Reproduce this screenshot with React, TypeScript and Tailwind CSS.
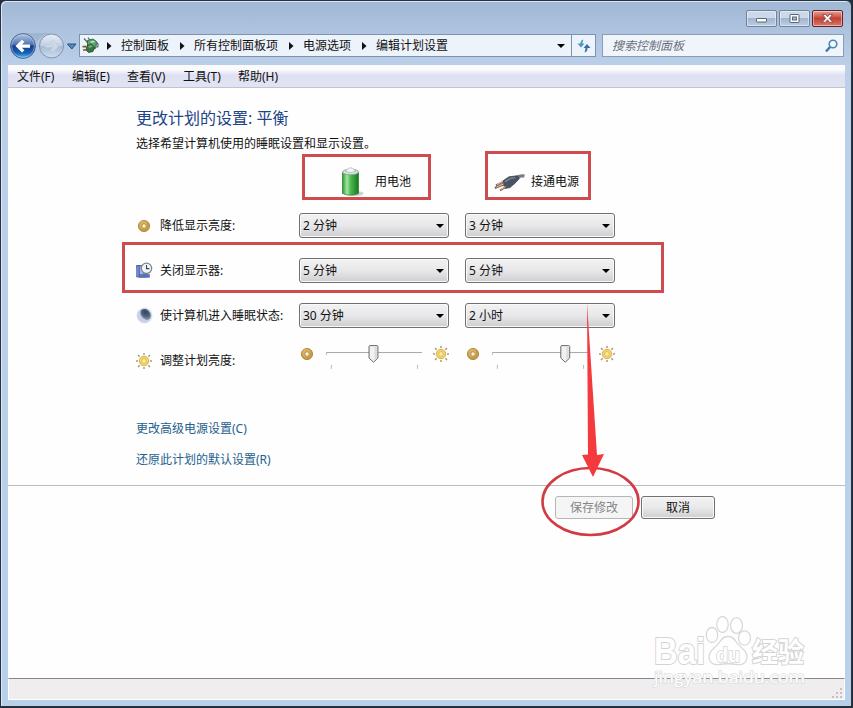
import React from "react";
import clsx from "clsx";

const crumbs = [
  { label: "控制面板", width: "w-[73px]" },
  { label: "所有控制面板项", width: "w-[109px]" },
  { label: "电源选项", width: "w-[73px]" },
  { label: "编辑计划设置", width: "w-[90px]" },
];

const menus = [
  { label: "文件(F)", width: "w-[55px]" },
  { label: "编辑(E)", width: "w-[55px]" },
  { label: "查看(V)", width: "w-[56px]" },
  { label: "工具(T)", width: "w-[55px]" },
  { label: "帮助(H)", width: "w-[60px]" },
];

const rows = [
  { label: "降低显示亮度:", icon: <DimIcon />, battery: "2 分钟", plugged: "3 分钟" },
  { label: "关闭显示器:", icon: <MonitorIcon />, battery: "5 分钟", plugged: "5 分钟" },
  { label: "使计算机进入睡眠状态:", icon: <MoonIcon />, battery: "30 分钟", plugged: "2 小时" },
];

function DimIcon() {
  return (
    <svg width="14" height="14" viewBox="0 0 14 14" className="shrink-0">
      <circle cx="7" cy="7" r="5.6" fill="#c79a45" stroke="#a57c35" strokeWidth="0.8" />
      <circle cx="6.3" cy="6" r="4" fill="#dcb866" opacity="0.8" />
      <circle cx="7" cy="7" r="2.2" fill="#fbf3da" stroke="#a37a30" strokeWidth="0.7" />
    </svg>
  );
}

function SunIcon() {
  return (
    <svg width="18" height="18" viewBox="0 0 18 18" className="shrink-0">
      <g stroke="#a89c78" strokeWidth="1.5">
        <path d="M9 1v2M9 15v2M1 9h2M15 9h2M3 3l1.7 1.700M13.300 13.300l1.700 1.700M3 15l1.700-1.700M13.300 4.700 15 3" />
      </g>
      <circle cx="9" cy="9" r="4.7" fill="#f4d768" stroke="#d3a947" strokeWidth="0.9" />
      <circle cx="9" cy="9" r="2.4" fill="#fbeb9f" stroke="#dfb854" strokeWidth="0.9" />
    </svg>
  );
}

function MonitorIcon() {
  return (
    <svg width="17" height="17" viewBox="0 0 17 17" className="shrink-0">
      <path d="M0.7 3.5h10v11.500H3z" fill="#6f84cf" stroke="#5365a8" />
      <path d="M.7 3.500h2.500v11.500H.7z" fill="#7d90d6" stroke="#4c5ea3" strokeWidth="0.8" />
      <path d="M4 4.300h3v9.500H4z" fill="#a6b4e8" />
      <path d="M3 12.500h10.500v2.800H3z" fill="#5f73c2" stroke="#4b5fae" strokeWidth="0.6" />
      <circle cx="10.5" cy="6.3" r="5.2" fill="#f2f5f7" stroke="#7c8791" strokeWidth="1.3" />
      <path d="M10.5 2.9v3.7h2.8" fill="none" stroke="#39434e" strokeWidth="1.1" />
    </svg>
  );
}

function MoonIcon() {
  return (
    <svg width="17" height="17" viewBox="0 0 17 17" className="shrink-0">
      <defs>
        <radialGradient id="moon" cx="0.65" cy="0.35" r="0.75">
          <stop offset="0" stopColor="#35445e" />
          <stop offset="0.55" stopColor="#53647f" />
          <stop offset="1" stopColor="#93a4be" />
        </radialGradient>
      </defs>
      <circle cx="8.5" cy="8.5" r="7.6" fill="#c5d2e6" stroke="#d9e1ed" strokeWidth="0.8" />
      <ellipse cx="9.6" cy="7.4" rx="4.6" ry="6" transform="rotate(-40 9.6 7.4)" fill="url(#moon)" />
    </svg>
  );
}

function BatteryIcon() {
  return (
    <svg width="24" height="32" viewBox="0 0 24 32" className="shrink-0">
      <defs>
        <linearGradient id="cell" x1="0" x2="1">
          <stop offset="0" stopColor="#2d9a38" />
          <stop offset="0.28" stopColor="#a2e69c" />
          <stop offset="0.5" stopColor="#4fb953" />
          <stop offset="1" stopColor="#16781f" />
        </linearGradient>
      </defs>
      <ellipse cx="15" cy="27.5" rx="7.5" ry="2.6" fill="#b6beb8" opacity="0.7" />
      <path d="M1.5 6.5v21q8 3.500 16 0v-21z" fill="url(#cell)" stroke="#35803b" strokeWidth="0.8" />
      <ellipse cx="9.5" cy="6" rx="8" ry="2.800" fill="#d7e5dc" stroke="#829c8a" strokeWidth="0.8" />
      <path d="M4 5.300 7.500 2.300q2-1 4 0L15 5.300q-5.500 2.500-11 0z" fill="#f3f6f8" stroke="#9daeb0" strokeWidth="0.7" />
    </svg>
  );
}

function PlugIcon() {
  return (
    <svg width="33" height="19" viewBox="0 0 33 19" className="shrink-0">
      <path d="M22 5.500q4-3.500 9.500-2.500" fill="none" stroke="#767d86" strokeWidth="3.2" />
      <path d="M9 8.500 16 3.800l8-1 2.500 2.500-3.500 4-6 5.300-5 .8z" fill="#495361" stroke="#343c48" strokeWidth="0.7" />
      <path d="M12 8.8 17.500 5.300l5-.5" fill="none" stroke="#8b96a5" strokeWidth="1.1" />
      <path d="M10 8.800 3 12.500M10.500 11.500 1.800 15M12.500 14 7 17.500" stroke="#80624c" strokeWidth="2" />
      <path d="M10 8.300 4 11.700M10.500 11 3.500 14M12.500 13.500 7.700 16.500" stroke="#ecd3b8" strokeWidth="0.9" />
    </svg>
  );
}

function PowerIcon() {
  return (
    <svg width="17" height="18" viewBox="0 0 17 18" className="shrink-0">
      <path d="M2 1.5 6 6M6 0.7 8.5 4" stroke="#5c665f" strokeWidth="1.2" />
      <path d="M5.500 3.500 11 2l3.500 2.500-.5 6.500-4 2-4.500-1z" fill="#5da56c" stroke="#255638" strokeWidth="0.8" />
      <path d="M8 4.5 11.5 3.7l1.8 1.2-4 1.2z" fill="#b3dfb8" />
      <path d="M14.5 5.5q2.5 1 1 5" fill="none" stroke="#4c6b55" strokeWidth="1.2" />
      <path d="M5 8.700 9 7l3.500 3-1.500 4.500-4.500 1L4 13z" fill="#397447" stroke="#244b30" strokeWidth="0.8" />
      <path d="M5.800 9.300 9 8l2 1.500-3.500 1.500z" fill="#71ae7c" />
      <path d="M.5 9.700h4M1 13h4" stroke="#7d5437" strokeWidth="1.7" />
    </svg>
  );
}

function Triangle({ className }: { className?: string }) {
  return (
    <svg width="8" height="4" viewBox="0 0 8 4" className={clsx("shrink-0", className)}>
      <path d="M0 0h8L4 4z" fill="#000" />
    </svg>
  );
}

function NavButtons() {
  return (
    <svg width="70" height="30" viewBox="0 0 70 30" className="shrink-0">
      <defs>
        <linearGradient id="back" x1="0" y1="0" x2="0" y2="1">
          <stop offset="0" stopColor="#b9cae6" />
          <stop offset="0.43" stopColor="#5277b5" />
          <stop offset="0.5" stopColor="#123e8b" />
          <stop offset="0.78" stopColor="#1b60b8" />
          <stop offset="1" stopColor="#57c7f2" />
        </linearGradient>
        <linearGradient id="forward" x1="0" y1="0" x2="0" y2="1">
          <stop offset="0" stopColor="#e8eef6" />
          <stop offset="0.48" stopColor="#c3d0e2" />
          <stop offset="0.5" stopColor="#a8bad3" />
          <stop offset="1" stopColor="#cfdeee" />
        </linearGradient>
      </defs>
      <path d="M15 2h27q-9 2-13 9-4-7-14-9" fill="#9eb1cd" opacity="0.8" />
      <circle cx="15" cy="15" r="12.4" fill="url(#back)" stroke="#49658e" />
      <circle cx="15" cy="15" r="11.3" fill="none" stroke="#c2d5ec" strokeWidth="0.7" opacity="0.7" />
      <path d="M7.5 15 14 8.8l2.4 2.2-2.5 2.4H22v3.4h-8.1l2.5 2.4-2.4 2.2z" fill="#fff" />
      <circle cx="43.5" cy="15" r="12" fill="url(#forward)" stroke="#8094b1" />
      <path d="m51 15-6.3-6-2.2 2.2 2.4 2.3H37v3.1h7.9l-2.4 2.3 2.2 2.2z" fill="#ccd8e6" stroke="#b8c7d9" strokeWidth="0.5" />
      <path d="M59.5 13h8.5l-4.2 5z" fill="#518bc0" stroke="#294d7f" />
    </svg>
  );
}

function WindowButton({ kind }: { kind: "min" | "max" | "close" }) {
  return (
    <div
      className={clsx(
        "flex h-[17px] w-[31px] items-center justify-center rounded-[2px] border shadow-[inset_0_0_0_1px_rgba(255,255,255,0.45)]",
        kind === "close"
          ? "border-[#671e24] bg-linear-to-b from-[#e0a197] from-0% via-[#c43f34] via-50% to-[#d77967]"
          : "border-[#71829b] bg-linear-to-b from-[#cbd9ea] from-45% via-[#a3b6cf] via-50% to-[#bccde2]",
      )}
    >
      <svg width="13" height="11" viewBox="0 0 13 11">
        {kind === "min" && <rect x="1.5" y="5.5" width="10" height="3.5" rx="0.5" fill="#fff" stroke="#59677d" />}
        {kind === "max" && (
          <>
            <rect x="2" y="1.5" width="9" height="8" rx="0.5" fill="#fff" stroke="#59677d" />
            <rect x="4.5" y="4" width="4" height="3" fill="#a8b8cc" stroke="#59677d" />
          </>
        )}
        {kind === "close" && (
          <path d="M1.500 1.500h3l2 2.300 2-2.300h3L8.300 5.400l3.500 4h-3l-2.300-2.600-2.300 2.600h-3l3.500-4z" fill="#fff" stroke="#6d3237" strokeWidth="0.7" />
        )}
      </svg>
    </div>
  );
}

function Select({ value }: { value: string }) {
  return (
    <div className="flex h-[25px] w-[150px] items-center justify-between rounded-[3px] border border-[#707070] bg-linear-to-b from-[#f3f2f3] from-0% via-[#e8e7e9] via-50% to-[#cecdd0] pr-1 pl-[3px] shadow-[inset_0_0_0_1px_#faf9fa]">
      <span>{value}</span>
      <Triangle />
    </div>
  );
}

function BrightnessSlider({ value }: { value: number }) {
  return (
    <div className="flex w-[150px] items-start">
      <div className="pt-[5px]">
        <DimIcon />
      </div>
      <svg width="104" height="30" viewBox="0 0 104 30" className="ml-[7px]">
        <path d="M5 10.5h97" stroke="#a9a9ad" />
        <path d="M5.5 10v3M10.5 23v4M97.5 23v4" stroke="#b9b9bd" />
        <g transform={`translate(${value} 0)`}>
          <path d="M-4.500 4.500q0-1 1-1h7q1 0 1 1V16L0 20.300-4.500 16z" fill="#f1f1f2" stroke="#65666a" />
          <path d="M1 5h2.500v10.500L1 18z" fill="#dcdcdf" />
        </g>
      </svg>
      <div className="ml-[8px] pt-[3px]">
        <SunIcon />
      </div>
    </div>
  );
}

function Watermark() {
  return (
    <svg width="158" height="78" viewBox="0 0 158 78" className="absolute top-[612px] left-[652px]">
      <g fill="#fff" stroke="#d9d9d9" strokeWidth="1.3">
        <ellipse cx="60" cy="23" rx="5.7" ry="7.5" />
        <ellipse cx="70.5" cy="12.5" rx="5.7" ry="8" />
        <ellipse cx="84.5" cy="13.5" rx="6" ry="7.8" />
        <ellipse cx="92.5" cy="26" rx="6" ry="7.2" />
        <path d="M76 24.500q5 0 8 5 2 3 7 7.500 5.500 5 3.500 11-2.500 5.500-9.500 4.500-9-1.500-18 0-7 1-9.500-4.500-2-6 3.500-11 5-4.500 7-7.500 3-5 8-5z" />
      </g>
      <g fill="#fff" stroke="#d4d4d4" strokeWidth="2" paintOrder="stroke" fontFamily="'Liberation Sans', 'Noto Sans CJK SC', sans-serif" fontWeight="700">
        <text x="2" y="52" fontSize="36" textLength="51" lengthAdjust="spacingAndGlyphs">Bai</text>
        <text x="64" y="50" fontSize="20" textLength="24" strokeWidth="1.5" lengthAdjust="spacingAndGlyphs">du</text>
        <text x="100" y="50" fontSize="27" textLength="52" lengthAdjust="spacingAndGlyphs">经验</text>
      </g>
      <text x="2" y="71" fontSize="17" fill="#fff" stroke="#dddddf" strokeWidth="1.5" paintOrder="stroke" fontFamily="'Open Sans', sans-serif" textLength="151" lengthAdjust="spacingAndGlyphs">
        jingyan.baidu.com
      </text>
    </svg>
  );
}

// Red marks over the dialog that point out what to change and where to save.
function Annotations() {
  return (
    <svg width="853" height="708" viewBox="0 0 853 708" className="pointer-events-none absolute top-0 left-0">
      <g fill="none" stroke="#ce4c4e" strokeWidth="3">
        <rect x="303.500" y="155.500" width="126" height="43" />
        <rect x="486.500" y="152.500" width="103" height="46" />
        <rect x="123.500" y="243.500" width="539" height="48" />
        <ellipse cx="590.500" cy="501.500" rx="48" ry="33.500" stroke="#d23b43" strokeWidth="2.600" />
      </g>
      <path d="M587 303 597 455l7-1-11 23-11-22 6-.5z" fill="#f33a3d" />
    </svg>
  );
}

export default function App() {
  return (
    <div className="h-[708px] w-[853px] bg-[#242d38]">
      <div className="relative flex h-[707px] w-[852px] flex-col rounded-t-[6px] border border-[#263442] bg-linear-to-b from-[#a1b8d5] from-0% via-[#bbcfe9] via-[65px] to-[#b8d1ea] pr-[6px] pl-[7px] font-['Noto_Sans','Noto_Sans_CJK_SC',sans-serif] text-[12px] leading-[18px] text-[#111] shadow-[inset_1px_1px_0_#dce8f5]">
        <div className="flex h-[33px] shrink-0 justify-end gap-[2px] pt-[9px] pr-[2px]">
          <WindowButton kind="min" />
          <WindowButton kind="max" />
          <WindowButton kind="close" />
        </div>

        <div className="flex h-[31px] shrink-0 items-start">
          <div className="-mt-[3px]">
            <NavButtons />
          </div>
          <div className="ml-[1px] flex h-[23px] w-[517px] items-center border border-[#7d92ae] bg-[#edf3fb]">
            <div className="ml-[2px]">
              <PowerIcon />
            </div>
            <div className="ml-[8px] flex flex-1 items-center">
              {crumbs.map((crumb) => (
                <div key={crumb.label} className={clsx("flex shrink-0 items-center whitespace-nowrap", crumb.width)}>
                  <svg width="5" height="8" viewBox="0 0 5 8" className="mr-[9px] shrink-0">
                    <path d="M0 0v8l4.500-4z" fill="#111" />
                  </svg>
                  {crumb.label}
                </div>
              ))}
            </div>
            <Triangle className="mr-[6px]" />
            <div className="flex h-full w-[24px] items-center justify-center border-l border-[#7d92ae]">
              <svg width="14" height="14" viewBox="0 0 14 14">
                <path d="M6.500 0.500Q3.500 1 3.500 4.500H.5L4 8.500l3.500-4H5.500Q5.500 2.500 6.500.5z" fill="#4a96c1" />
                <path d="M7.500 13.500q3-.5 3-4.500h3L10 5 6.500 9h2q0 2.500-1 4.500z" fill="#356fa7" />
              </svg>
            </div>
          </div>
          <div className="ml-[6px] flex h-[23px] w-[242px] shrink-0 items-center justify-between border border-[#8a9db7] bg-[#f0f5fb] pr-[5px] pl-[9px]">
            <span className="text-[#68707a] italic">搜索控制面板</span>
            <svg width="13" height="14" viewBox="0 0 13 14">
              <path d="M5.500 7.500 1 12.500" stroke="#3e79aa" strokeWidth="2.500" />
              <circle cx="8" cy="5" r="3.800" fill="#f5faff" stroke="#4b86b5" strokeWidth="1.600" />
            </svg>
          </div>
        </div>

        <div className="flex h-[23px] shrink-0 items-center border-b border-[#bfc3d4] bg-linear-to-b from-[#fbfbfe] from-20% via-[#dfe1f2] via-45% to-[#e2e3f2] pt-[2px] pl-[9px]">
          {menus.map((menu) => (
            <span key={menu.label} className={clsx("whitespace-nowrap", menu.width)}>
              {menu.label}
            </span>
          ))}
        </div>

        <div className="flex h-[590px] w-[837px] shrink-0 flex-col bg-[#fefefe]">
          <div className="h-[398px] shrink-0 border-b border-[#b9bebe] pl-[128px]">
            <h1 className="pt-[18px] text-[16px] leading-[24px] text-[#1d4484]">更改计划的设置: 平衡</h1>
            <p className="mt-[5px]">选择希望计算机使用的睡眠设置和显示设置。</p>

            <div className="flex h-[50px] items-center pt-[8px]">
              <div className="ml-[205px] flex w-[148px] shrink-0 items-center">
                <BatteryIcon />
                <span className="ml-[10px]">用电池</span>
              </div>
              <div className="ml-[4px] flex items-center">
                <PlugIcon />
                <span className="ml-[5px]">接通电源</span>
              </div>
            </div>

            {rows.map((row) => (
              <div key={row.label} className="flex h-[45px] items-center">
                <div className="flex w-[163px] shrink-0 items-center">
                  <div className="flex w-[16px] justify-center">{row.icon}</div>
                  <span className="ml-[8px] whitespace-nowrap">{row.label}</span>
                </div>
                <div className="flex gap-4">
                  <Select value={row.battery} />
                  <Select value={row.plugged} />
                </div>
              </div>
            ))}
            <div className="flex h-[45px] items-center">
              <div className="flex w-[163px] shrink-0 items-center">
                <div className="flex w-[16px] justify-center">
                  <SunIcon />
                </div>
                <span className="ml-[8px]">调整计划亮度:</span>
              </div>
              <div className="-mt-[7px] ml-[1px] flex gap-4">
                <BrightnessSlider value={53} />
                <BrightnessSlider value={79} />
              </div>
            </div>

            <div className="mt-[37px] flex flex-col gap-[13px] text-[#24618c]">
              <a>更改高级电源设置(C)</a>
              <a>还原此计划的默认设置(R)</a>
            </div>
          </div>

          <div className="flex gap-[8px] pt-[10px] pl-[547px]">
            <button className="h-[23px] w-[78px] rounded-[3px] border border-[#b5b6b8] bg-[#f5f5f6] text-[#858585]">保存修改</button>
            <button className="h-[23px] w-[74px] rounded-[3px] border border-[#707070] bg-linear-to-b from-[#f3f2f3] via-[#e9e8ea] to-[#cfced1] shadow-[inset_0_0_0_1px_#faf9fa]">
              取消
            </button>
          </div>
        </div>

        <div className="flex h-[22px] w-[837px] shrink-0 items-end justify-end border border-t-[#85868d] border-r-white border-b-white border-l-white bg-[#f0edef]">
          <svg width="12" height="12" viewBox="0 0 12 12">
            <path d="M8 1h2v2H8zM4 5h2v2H4zM8 5h2v2H8zM0 9h2v2H0zM4 9h2v2H4zM8 9h2v2H8z" fill="#c4c1c5" />
          </svg>
        </div>
      </div>
      <Watermark />
      <Annotations />
    </div>
  );
}
